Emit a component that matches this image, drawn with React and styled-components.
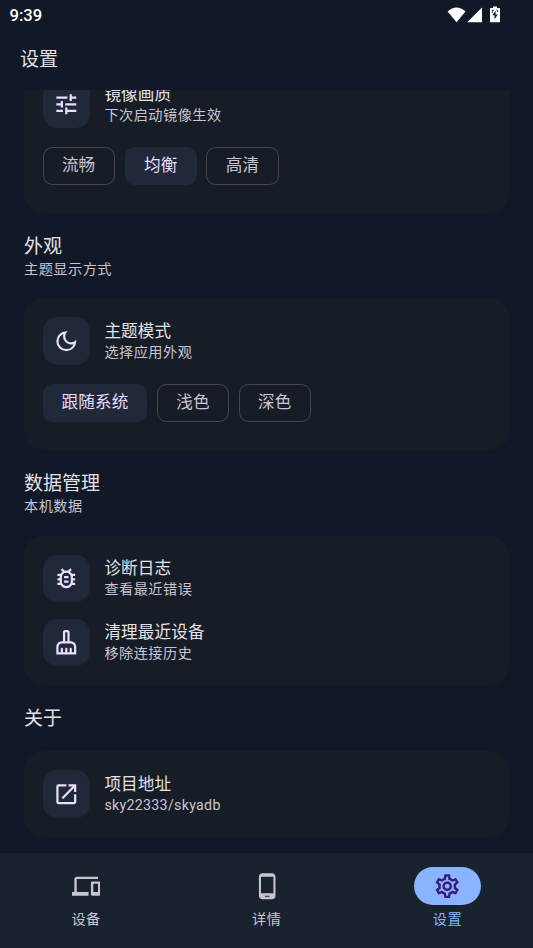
import React, { useState } from 'react';
import styled, { createGlobalStyle } from 'styled-components';
import {
  MdTune,
  MdOutlineDarkMode,
  MdOutlineBugReport,
  MdOutlineCleaningServices,
  MdOpenInNew,
  MdDevices,
  MdPhoneAndroid,
  MdOutlineSettings
} from 'react-icons/md';

const GlobalStyle = createGlobalStyle`
  * {
    box-sizing: border-box;
  }
  body {
    margin: 0;
    background: #111827;
    font-family: Roboto, "Noto Sans CJK SC", sans-serif;
  }
`;

const Screen = styled.div`
  width: 533px;
  height: 948px;
  display: flex;
  flex-direction: column;
  overflow: hidden;
  background: #111827;
  color: #e6e1e5;
`;

const StatusBar = styled.div`
  height: 28px;
  flex: none;
  display: flex;
  justify-content: space-between;
  align-items: center;
  padding: 3px 32px 0 9.5px;
  color: #fff;
`;

const Clock = styled.span`
  font-size: 16.6px;
  font-weight: 500;
  line-height: 26px;
`;

const StatusIcons = styled.svg`
  width: 54px;
  height: 18px;
  margin-top: -3px;
`;

const TopBar = styled.header`
  height: 62px;
  flex: none;
  padding: 18px 20px 0;
  font-size: 19px;
  line-height: 28px;
`;

const Content = styled.main`
  flex: 1;
  min-height: 0;
  overflow: hidden;
  padding: 0 24px;
`;

const ScrollBody = styled.div`
  margin-top: -28.7px;
  display: flex;
  flex-direction: column;
  gap: 19px;
`;

const SectionTitle = styled.h2`
  margin: 0;
  padding-top: 1px;
  font-size: 19px;
  font-weight: 400;
  line-height: 27.3px;
`;

const Hint = styled.div`
  margin-top: -0.3px;
  padding-bottom: 0.3px;
  font-size: 14.2px;
  line-height: 19px;
  letter-spacing: ${props => (props.$latin ? '0.3px' : '0.47px')};
  color: #cac4d0;
`;

const Card = styled.section`
  display: flex;
  flex-direction: column;
  gap: 16.6px;
  padding: 19px 19px ${props => (props.$chips ? '28.5px' : '19px')};
  border-radius: 19px;
  background: #161d27;
`;

const Row = styled.div`
  display: flex;
  align-items: center;
  gap: 14px;
`;

const IconTile = styled.div`
  width: 47.4px;
  height: 47.4px;
  flex: none;
  display: flex;
  align-items: center;
  justify-content: center;
  border-radius: 14.2px;
  background: #1f2937;
  color: #eaddff;
  font-size: 26.6px;
`;

const RowTitle = styled.div`
  font-size: 16.6px;
  line-height: 23.7px;
  letter-spacing: 0.12px;
`;

const ChipRow = styled.div`
  display: flex;
  gap: 9.5px;
  margin-top: 2.4px;
`;

const Chip = styled.button`
  height: 38px;
  padding: 0 ${props => (props.$selected ? '19px 3px' : '17px 3px')};
  min-width: 72.2px;
  border: ${props => (props.$selected ? 'none' : '1px solid #49454f')};
  border-radius: 9.5px;
  background: ${props => (props.$selected ? '#1f2937' : 'transparent')};
  color: ${props => (props.$selected ? '#eaddff' : '#cac4d0')};
  font-family: inherit;
  font-size: 16.6px;
  font-weight: 400;
  letter-spacing: 0.12px;

  &:first-child {
    padding-left: ${props => (props.$selected ? '18.6px' : '16px')};
  }
`;

const NavBar = styled.nav`
  height: 95px;
  flex: none;
  display: flex;
  gap: 9.5px;
  padding: 14.2px 0 0 0.5px;
  background: #19222f;
`;

const NavItem = styled.div`
  flex: 1;
  display: flex;
  flex-direction: column;
  align-items: center;
  gap: 4.7px;
  font-size: 14.2px;
  line-height: 19px;
  letter-spacing: 0.5px;
  color: ${props => (props.$active ? '#8ab4ff' : '#cac4d0')};
`;

const NavIcon = styled.div`
  width: 66.4px;
  height: 38px;
  display: flex;
  align-items: center;
  justify-content: center;
  border-radius: 19px;
  font-size: 28.4px;
  background: ${props => (props.$active ? '#8ab4ff' : 'transparent')};
  color: ${props => (props.$active ? '#381e72' : '#cac4d0')};
`;

const SettingRow = ({ icon: Icon, title, hint, latin }) => (
  <Row>
    <IconTile>
      <Icon />
    </IconTile>
    <div>
      <RowTitle>{title}</RowTitle>
      <Hint $latin={latin}>{hint}</Hint>
    </div>
  </Row>
);

const ChipGroup = ({ options, initial }) => {
  const [selected, setSelected] = useState(initial);

  return (
    <ChipRow>
      {options.map(option => (
        <Chip key={option} $selected={option === selected} onClick={() => setSelected(option)}>
          {option}
        </Chip>
      ))}
    </ChipRow>
  );
};

const SectionHeader = ({ title, hint }) => (
  <div>
    <SectionTitle>{title}</SectionTitle>
    {hint && <Hint>{hint}</Hint>}
  </div>
);

const tabs = [
  { label: '设备', icon: MdDevices },
  { label: '详情', icon: MdPhoneAndroid },
  { label: '设置', icon: MdOutlineSettings }
];

const App = () => {
  const [tab, setTab] = useState('设置');

  return (
    <Screen>
      <GlobalStyle />
      <StatusBar>
        <Clock>9:39</Clock>
        <StatusIcons viewBox="0 0 54 18" fill="#fff">
          <path d="M0.600 6.400Q9.500 -1.200 18.500 6.400L9.500 17.200Z" />
          <path d="M35 2.500V17.300H20.200Z" />
          <path d="M46 1.500h4v1.400h2.200q.8 0 .8.800V16.400q0 .9-.9.900h-8.200q-.9 0-.9-.9V3.700q0-.8.800-.8H46z" />
          <path d="M48.600 5.800L45.300 10.300H47.500V14.200L50.800 9.400H48.600Z" fill="#111827" />
          <path d="M45.300 7.800V5.200H47M49.500 5.200H50.700V7" fill="none" stroke="#111827" strokeWidth="0.900" />
        </StatusIcons>
      </StatusBar>
      <TopBar>设置</TopBar>
      <Content>
        <ScrollBody>
          <Card $chips>
            <SettingRow icon={MdTune} title="镜像画质" hint="下次启动镜像生效" />
            <ChipGroup options={['流畅', '均衡', '高清']} initial="均衡" />
          </Card>
          <SectionHeader title="外观" hint="主题显示方式" />
          <Card $chips>
            <SettingRow icon={MdOutlineDarkMode} title="主题模式" hint="选择应用外观" />
            <ChipGroup options={['跟随系统', '浅色', '深色']} initial="跟随系统" />
          </Card>
          <SectionHeader title="数据管理" hint="本机数据" />
          <Card>
            <SettingRow icon={MdOutlineBugReport} title="诊断日志" hint="查看最近错误" />
            <SettingRow icon={MdOutlineCleaningServices} title="清理最近设备" hint="移除连接历史" />
          </Card>
          <SectionHeader title="关于" />
          <Card>
            <SettingRow icon={MdOpenInNew} title="项目地址" hint="sky22333/skyadb" latin />
          </Card>
        </ScrollBody>
      </Content>
      <NavBar>
        {tabs.map(({ label, icon: Icon }) => (
          <NavItem key={label} $active={label === tab} onClick={() => setTab(label)}>
            <NavIcon $active={label === tab}>
              <Icon />
            </NavIcon>
            {label}
          </NavItem>
        ))}
      </NavBar>
    </Screen>
  );
};

export default App;
